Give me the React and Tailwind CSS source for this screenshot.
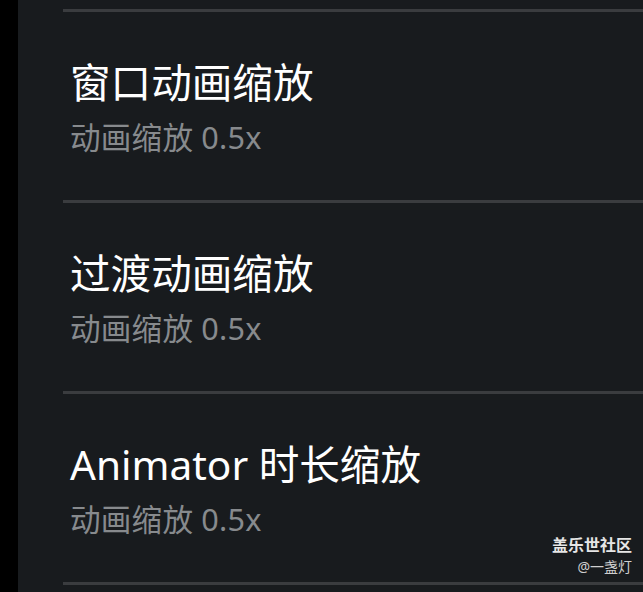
export default function App() {
  const items = [
    { title: "窗口动画缩放", sub: "动画缩放 0.5x" },
    { title: "过渡动画缩放", sub: "动画缩放 0.5x" },
    { title: "Animator 时长缩放", sub: "动画缩放 0.5x" },
  ];
  return (
    <div
      className="relative flex h-[592px] w-[643px] overflow-hidden bg-[#181b1e]"
      style={{ fontFamily: '"Noto Sans", "Noto Sans CJK SC", sans-serif' }}
    >
      <div className="w-[18px] shrink-0 bg-black" />
      <div className="flex flex-1 flex-col pt-[9px]">
        {items.map((it, i) => (
          <div key={i} className="flex flex-col">
            <div className="ml-[45px] h-[3px] bg-[#3a3c3f]" />
            <div className="flex h-[188px] flex-col pl-[52px] pt-[47px]">
              <div className="text-[40.6px] leading-[48px] text-white">{it.title}</div>
              <div className="mt-[12px] text-[30.6px] leading-[36px] tracking-[0.2px] text-[#878a8d]">{it.sub}</div>
            </div>
          </div>
        ))}
        <div className="ml-[45px] h-[3px] bg-[#3a3c3f]" />
      </div>
      <div className="absolute right-[11px] top-[535px] flex flex-col items-end">
        <div className="text-[16px] font-bold leading-[20px] text-[#e6e6e6]">盖乐世社区</div>
        <div className="mt-[3px] text-[14px] leading-[18px] text-[#cfcfcf]">@一盏灯</div>
      </div>
    </div>
  );
}
